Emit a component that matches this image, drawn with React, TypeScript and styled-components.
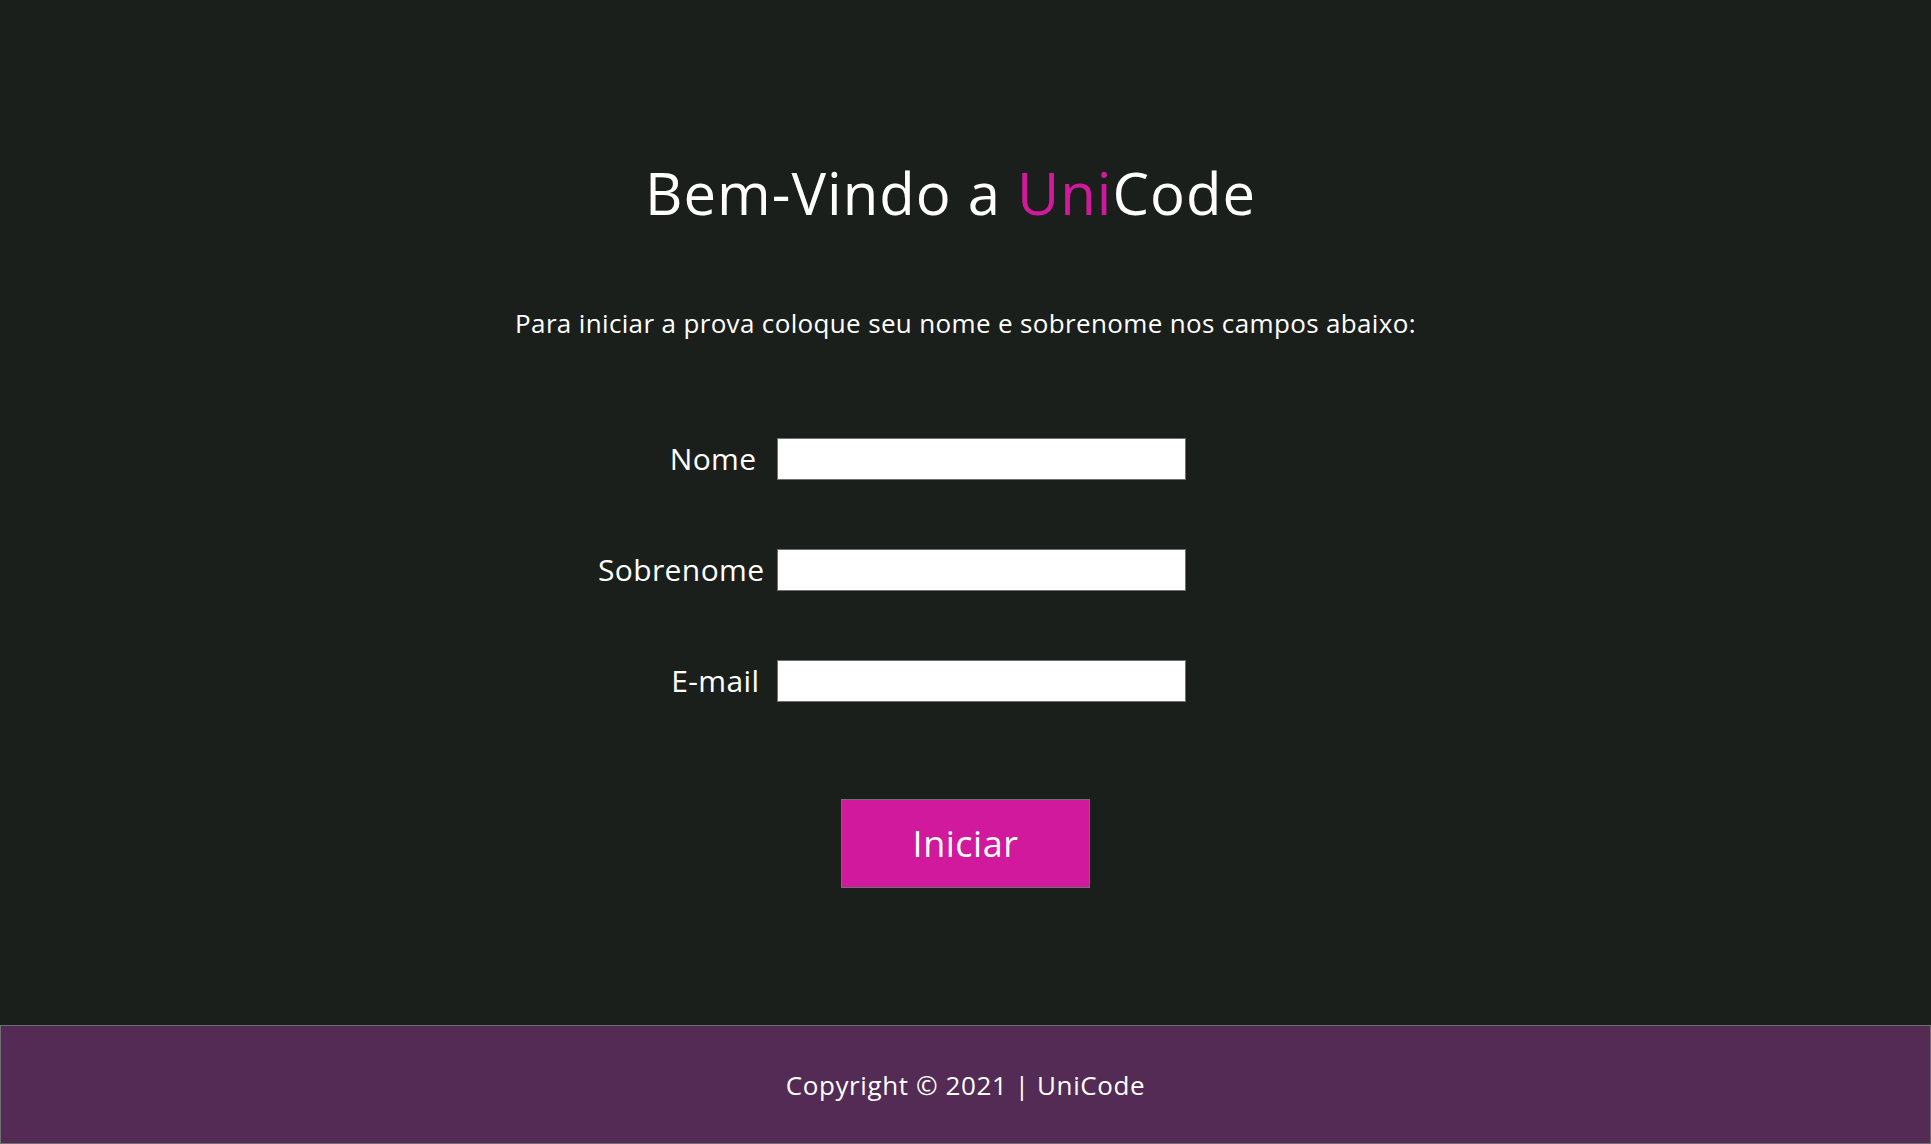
import React from 'react';
import styled, { createGlobalStyle } from 'styled-components';

const GlobalStyle = createGlobalStyle`
  html, body {
    margin: 0;
    padding: 0;
    background: #1b1f1c;
  }
  body {
    font-family: 'Open Sans', Lato, sans-serif;
    color: #ffffff;
  }
`;

const Page = styled.div`
  display: flex;
  flex-direction: column;
  height: 1144px;
  background: #1b1f1c;
`;

const Main = styled.main`
  flex: 1;
  display: flex;
  flex-direction: column;
  align-items: center;
  padding-top: 160px;
`;

const Title = styled.h1`
  margin: 0;
  font-size: 58px;
  line-height: 66px;
  letter-spacing: 1px;
  font-weight: 400;
  color: #ffffff;
  transform: translateX(-15px);
`;

const Brand = styled.span`
  color: #d1199e;
`;

const Subtitle = styled.p`
  margin: 82px 0 0;
  font-size: 26px;
  line-height: 30px;
  letter-spacing: 0.35px;
  color: #ffffff;
`;

const Form = styled.form`
  display: grid;
  grid-template-columns: 172px 409px;
  column-gap: 12px;
  row-gap: 69px;
  align-items: center;
  margin-top: 100px;
  padding-right: 153px;
`;

const Label = styled.label<{ $shift?: number }>`
  font-size: 30px;
  line-height: 38px;
  letter-spacing: 0.4px;
  text-align: right;
  white-space: nowrap;
  padding-right: ${p => p.$shift ?? 0}px;
`;

const Input = styled.input`
  box-sizing: border-box;
  width: 409px;
  height: 42px;
  margin: 0;
  border: 1px solid #707070;
  background: #ffffff;
  font-family: inherit;
  font-size: 22px;
  padding: 0 8px;
  outline: none;
`;

const StartButton = styled.button`
  box-sizing: border-box;
  width: 249px;
  height: 89px;
  margin-top: 97px;
  border: 1px solid #707070;
  background: #d1199e;
  color: #ffffff;
  font-family: inherit;
  font-size: 36px;
  letter-spacing: 0.5px;
  cursor: pointer;
`;

const Footer = styled.footer`
  box-sizing: border-box;
  height: 119px;
  display: flex;
  align-items: center;
  justify-content: center;
  background: #532b55;
  border: 1px solid #707070;
  font-size: 26px;
  letter-spacing: 0.6px;
  color: #ffffff;
`;

const fields = [
  { id: 'nome', label: 'Nome', type: 'text', shift: 8 },
  { id: 'sobrenome', label: 'Sobrenome', type: 'text', shift: 0 },
  { id: 'email', label: 'E-mail', type: 'email', shift: 5 },
];

export default function App() {
  return (
    <>
      <GlobalStyle />
      <Page>
        <Main>
          <Title>
            Bem-Vindo a <Brand>Uni</Brand>Code
          </Title>
          <Subtitle>Para iniciar a prova coloque seu nome e sobrenome nos campos abaixo:</Subtitle>
          <Form onSubmit={e => e.preventDefault()}>
            {fields.map(f => (
              <React.Fragment key={f.id}>
                <Label htmlFor={f.id} $shift={f.shift}>
                  {f.label}
                </Label>
                <Input id={f.id} type={f.type} />
              </React.Fragment>
            ))}
          </Form>
          <StartButton type='button'>Iniciar</StartButton>
        </Main>
        <Footer>Copyright © 2021 | UniCode</Footer>
      </Page>
    </>
  );
}
